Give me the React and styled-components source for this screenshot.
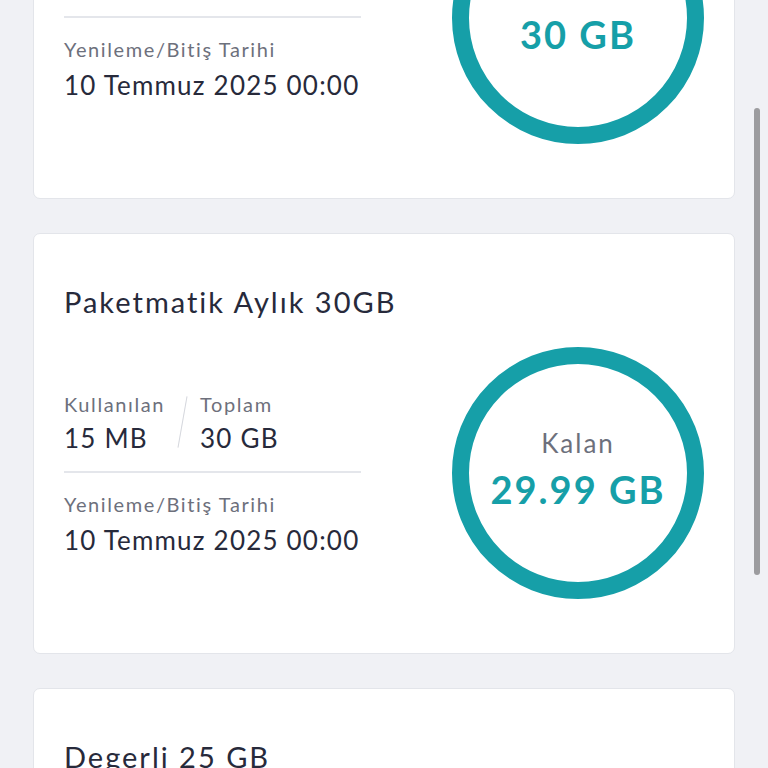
import React, { useLayoutEffect, useRef } from 'react';
import styled, { createGlobalStyle } from 'styled-components';

const GlobalStyle = createGlobalStyle`
  html, body {
    margin: 0;
    padding: 0;
    background: #f0f1f5;
    font-family: "Lato", "Open Sans", sans-serif;
    overflow: hidden;
  }
  * { box-sizing: border-box; }
`;

const Viewport = styled.div`
  height: 100vh;
  overflow-y: auto;
  scrollbar-width: none;
  &::-webkit-scrollbar { display: none; }
`;

const List = styled.div`
  display: flex;
  flex-direction: column;
  gap: 34px;
  padding: 32px 33px 40px 33px;
`;

const Card = styled.section`
  background: #ffffff;
  border: 1px solid #e3e5ea;
  border-radius: 7px;
  padding: 50px 30px 54px 30px;
`;

const Title = styled.h2`
  margin: 0;
  font-size: 29px;
  line-height: 36px;
  font-weight: 400;
  letter-spacing: 2px;
  color: #272a3b;
`;

const Body = styled.div`
  display: flex;
  align-items: center;
  justify-content: space-between;
  margin-top: 27px;
`;

const Details = styled.div`
  width: 297px;
  display: flex;
  flex-direction: column;
`;

const Stats = styled.div`
  display: flex;
  align-items: center;
  gap: 17px;
`;

const Stat = styled.div`
  display: flex;
  flex-direction: column;
`;

const Slash = styled.div`
  width: 1px;
  height: 52px;
  background: #d5d7dd;
  transform: rotate(10deg);
`;

const Label = styled.span`
  font-size: 20px;
  line-height: 28px;
  letter-spacing: 1.6px;
  color: #6d707c;
  white-space: nowrap;
`;

const Value = styled.span`
  font-size: 26px;
  line-height: 32px;
  letter-spacing: 1.2px;
  margin-top: ${p => p.$gap || 4}px;
  color: #272a3b;
  white-space: nowrap;
`;

const Rule = styled.hr`
  width: 100%;
  margin: 17px 0;
  border: 0;
  height: 2px;
  background: #e4e6eb;
`;

const Ring = styled.div`
  flex: 0 0 252px;
  width: 252px;
  height: 252px;
  border: 17px solid #169fa8;
  border-radius: 50%;
  display: flex;
  flex-direction: column;
  align-items: center;
  justify-content: center;
  padding-bottom: 6px;
`;

const RingLabel = styled.span`
  font-size: 26px;
  line-height: 30px;
  letter-spacing: 2px;
  color: #6d707c;
`;

const RingValue = styled.span`
  font-size: 38px;
  line-height: 46px;
  font-weight: 700;
  letter-spacing: 2px;
  color: #169fa8;
  margin-top: 8px;
`;

const Thumb = styled.div`
  position: fixed;
  right: 8px;
  top: 108px;
  width: 6px;
  height: 467px;
  border-radius: 3px;
  background: #9c9c9f;
`;

const packages = [
  { name: 'Hoşgeldin Paketi 30GB', used: '0 MB', total: '30 GB', left: '30 GB', date: '10 Temmuz 2025 00:00' },
  { name: 'Paketmatik Aylık 30GB', used: '15 MB', total: '30 GB', left: '29.99 GB', date: '10 Temmuz 2025 00:00' },
  { name: 'Degerli 25 GB', used: '0 MB', total: '25 GB', left: '25 GB', date: '10 Temmuz 2025 00:00' },
];

const PackageCard = React.forwardRef(({ pkg }, ref) => (
  <Card ref={ref}>
    <Title>{pkg.name}</Title>
    <Body>
      <Details>
        <Stats>
          <Stat>
            <Label>Kullanılan</Label>
            <Value>{pkg.used}</Value>
          </Stat>
          <Slash />
          <Stat>
            <Label>Toplam</Label>
            <Value>{pkg.total}</Value>
          </Stat>
        </Stats>
        <Rule />
        <Label>Yenileme/Bitiş Tarihi</Label>
        <Value $gap={6}>{pkg.date}</Value>
      </Details>
      <Ring>
        <RingLabel>Kalan</RingLabel>
        <RingValue>{pkg.left}</RingValue>
      </Ring>
    </Body>
  </Card>
));

export default function App() {
  const viewRef = useRef(null);
  const secondRef = useRef(null);

  useLayoutEffect(() => {
    // sayfa ikinci paket ekranın üst kısmına gelecek şekilde kaydırılmış
    if (viewRef.current && secondRef.current) {
      viewRef.current.scrollTop = secondRef.current.offsetTop - 233;
    }
  }, []);

  return (
    <>
      <GlobalStyle />
      <Viewport ref={viewRef}>
        <List>
          {packages.map((pkg, i) => (
            <PackageCard key={pkg.name} pkg={pkg} ref={i === 1 ? secondRef : null} />
          ))}
        </List>
      </Viewport>
      <Thumb />
    </>
  );
}
